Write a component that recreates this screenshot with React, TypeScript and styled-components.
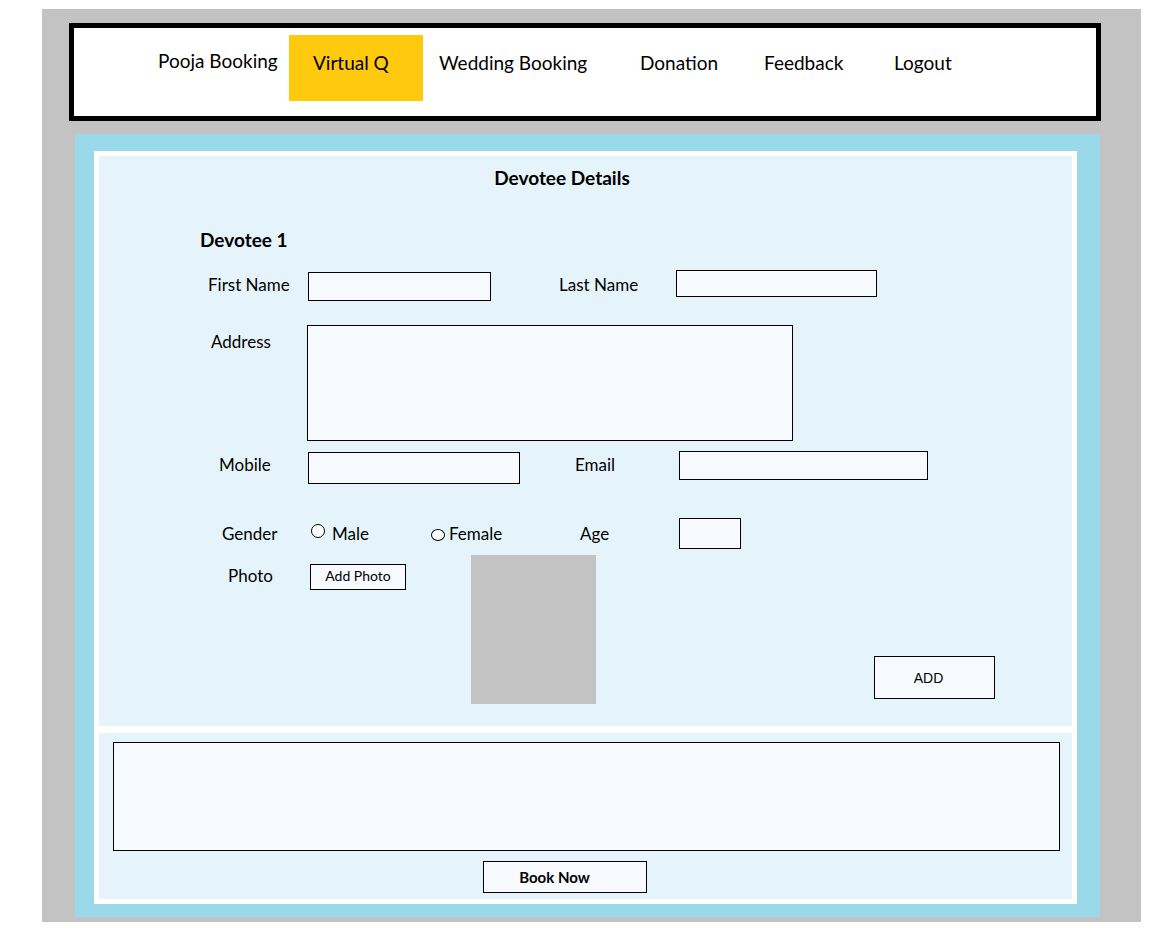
import React from 'react';
import styled, { createGlobalStyle } from 'styled-components';

const GlobalStyle = createGlobalStyle`
  html, body {
    margin: 0;
    padding: 0;
    background: #fff;
  }
  body {
    font-family: Lato, "Open Sans", sans-serif;
    color: #000;
  }
  * {
    box-sizing: border-box;
  }
`;

const Page = styled.div`
  padding: 9px 0 0 42px;
`;

const Frame = styled.div`
  width: 1099px;
  height: 913px;
  background: #c3c3c3;
  padding: 14px 0 0 27px;
`;

// top menu
const NavBar = styled.nav`
  width: 1032px;
  height: 98px;
  border: 5px solid #000;
  background: #fff;
  display: flex;
  align-items: flex-start;
  padding: 7px 0 0 84px;
`;

const NavItem = styled.a<{ $w?: number; $active?: boolean; $pt?: number }>`
  display: block;
  flex: none;
  width: ${(p) => (p.$w ? `${p.$w}px` : 'auto')};
  height: 66px;
  padding-top: ${(p) => p.$pt ?? 16}px;
  padding-left: ${(p) => (p.$active ? 24 : 0)}px;
  margin-right: ${(p) => (p.$active ? 16 : 0)}px;
  background: ${(p) => (p.$active ? '#ffc90e' : 'transparent')};
  font-size: 19px;
  line-height: 24px;
  color: #000;
  text-decoration: none;
  white-space: nowrap;
  cursor: pointer;
`;

const Panel = styled.main`
  width: 1025px;
  height: 783px;
  margin: 13px 0 0 6px;
  background: #99d9ea;
  padding: 17px 0 0 19px;
`;

const WhiteFrame = styled.div`
  width: 983px;
  height: 753px;
  background: #fff;
  padding: 5px;
  display: flex;
  flex-direction: column;
  gap: 7px;
`;

const Section = styled.section<{ $h: number }>`
  flex: none;
  height: ${(p) => p.$h}px;
  background: #e5f4fa;
`;

const FormSection = styled(Section)`
  padding-top: 10px;
`;

const Title = styled.h2`
  margin: 0;
  padding-right: 47px;
  text-align: center;
  font-size: 19px;
  line-height: 24px;
  font-weight: 700;
`;

const DevoteeHeading = styled.h3`
  margin: 38px 0 0 101px;
  font-size: 19px;
  line-height: 24px;
  font-weight: 700;
`;

const Row = styled.div<{ $mt: number }>`
  display: flex;
  align-items: flex-start;
  margin-top: ${(p) => p.$mt}px;
  padding-left: 100px;
`;

const FieldLabel = styled.label<{ $w: number; $pl?: number; $mt?: number }>`
  flex: none;
  width: ${(p) => p.$w}px;
  padding-left: ${(p) => p.$pl ?? 0}px;
  margin-top: ${(p) => p.$mt ?? 0}px;
  font-size: 17px;
  line-height: 24px;
  white-space: nowrap;
`;

const TextBox = styled.input<{ $w: number; $h: number; $mt?: number }>`
  flex: none;
  width: ${(p) => p.$w}px;
  height: ${(p) => p.$h}px;
  margin: ${(p) => p.$mt ?? 0}px 0 0 0;
  border: 1px solid #000;
  border-radius: 0;
  background: #f7fbff;
  padding: 0 4px;
  font: inherit;
  font-size: 15px;
  outline: none;
`;

const AddressBox = styled.textarea`
  flex: none;
  width: 486px;
  height: 116px;
  margin: 0;
  border: 1px solid #000;
  border-radius: 0;
  background: #f7fbff;
  resize: none;
  font: inherit;
  outline: none;
`;

const RadioOption = styled.label<{ $w: number }>`
  flex: none;
  width: ${(p) => p.$w}px;
  display: flex;
  align-items: flex-start;
`;

const RadioDot = styled.span<{ $w: number; $h: number; $mt: number }>`
  flex: none;
  width: ${(p) => p.$w}px;
  height: ${(p) => p.$h}px;
  margin-top: ${(p) => p.$mt}px;
  border: 1px solid #000;
  border-radius: 50%;
  background: #fff;
`;

const RadioText = styled.span<{ $ml: number }>`
  margin: 4px 0 0 ${(p) => p.$ml}px;
  font-size: 17px;
  line-height: 24px;
`;

const PlainButton = styled.button`
  flex: none;
  padding: 0;
  border: 1px solid #000;
  border-radius: 0;
  background: #f7fbff;
  color: #000;
  cursor: pointer;
`;

const AddPhotoButton = styled(PlainButton)`
  width: 96px;
  height: 26px;
  margin-top: 9px;
  font-family: Lato, sans-serif;
  font-size: 14px;
  line-height: 20px;
  padding-bottom: 3px;
`;

const PhotoPreview = styled.div`
  flex: none;
  width: 125px;
  height: 149px;
  margin-left: 65px;
  background: #c3c3c3;
`;

const AddButton = styled(PlainButton)`
  width: 121px;
  height: 43px;
  margin: 101px 0 0 278px;
  padding-right: 12px;
  font-family: "Liberation Sans", Arial, sans-serif;
  font-size: 14px;
`;

const SummaryBox = styled.div`
  width: 947px;
  height: 109px;
  margin: 9px 0 0 14px;
  border: 1px solid #000;
  background: #f7fbff;
`;

const BookButton = styled(PlainButton)`
  display: block;
  width: 164px;
  height: 32px;
  margin: 10px 0 0 384px;
  padding: 0 21px 1px 0;
  font-family: Lato, sans-serif;
  font-weight: 700;
  font-size: 15px;
`;

const App: React.FC = () => {
  return (
    <>
      <GlobalStyle />
      <Page>
        <Frame>
          <NavBar>
            <NavItem $w={131} $pt={14}>Pooja Booking</NavItem>
            <NavItem $w={134} $active>Virtual Q</NavItem>
            <NavItem $w={201}>Wedding Booking</NavItem>
            <NavItem $w={124}>Donation</NavItem>
            <NavItem $w={130}>Feedback</NavItem>
            <NavItem>Logout</NavItem>
          </NavBar>

          <Panel>
            <WhiteFrame>
              <FormSection $h={570}>
                <Title>Devotee Details</Title>
                <DevoteeHeading>Devotee 1</DevoteeHeading>

                <Row $mt={18}>
                  <FieldLabel $w={109} $pl={9} $mt={3}>First Name</FieldLabel>
                  <TextBox $w={183} $h={29} $mt={2} />
                  <FieldLabel $w={185} $pl={68} $mt={3}>Last Name</FieldLabel>
                  <TextBox $w={201} $h={27} />
                </Row>

                <Row $mt={24}>
                  <FieldLabel $w={108} $pl={12} $mt={5}>Address</FieldLabel>
                  <AddressBox />
                </Row>

                <Row $mt={10}>
                  <FieldLabel $w={109} $pl={20} $mt={2}>Mobile</FieldLabel>
                  <TextBox $w={212} $h={32} $mt={1} />
                  <FieldLabel $w={159} $pl={55} $mt={2}>Email</FieldLabel>
                  <TextBox $w={249} $h={29} />
                </Row>

                <Row $mt={34}>
                  <FieldLabel $w={112} $pl={23} $mt={4}>Gender</FieldLabel>
                  <RadioOption $w={120}>
                    <RadioDot $w={14} $h={14} $mt={6} />
                    <RadioText $ml={7}>Male</RadioText>
                  </RadioOption>
                  <RadioOption $w={149}>
                    <RadioDot $w={14} $h={12} $mt={11} />
                    <RadioText $ml={4}>Female</RadioText>
                  </RadioOption>
                  <FieldLabel $w={99} $mt={4}>Age</FieldLabel>
                  <TextBox $w={62} $h={31} />
                </Row>

                <Row $mt={6}>
                  <FieldLabel $w={111} $pl={29} $mt={9}>Photo</FieldLabel>
                  <AddPhotoButton>Add Photo</AddPhotoButton>
                  <PhotoPreview />
                  <AddButton>ADD</AddButton>
                </Row>
              </FormSection>

              <Section $h={166}>
                <SummaryBox />
                <BookButton>Book Now</BookButton>
              </Section>
            </WhiteFrame>
          </Panel>
        </Frame>
      </Page>
    </>
  );
};

export default App;
